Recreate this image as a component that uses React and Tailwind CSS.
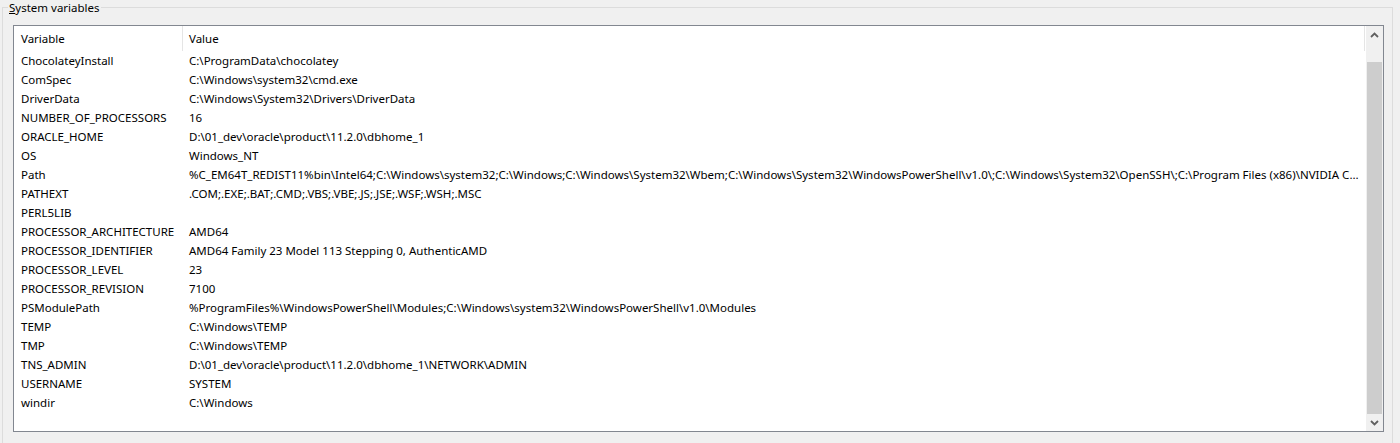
import React from 'react';

const rows = [
  ['ChocolateyInstall', 'C:\\ProgramData\\chocolatey'],
  ['ComSpec', 'C:\\Windows\\system32\\cmd.exe'],
  ['DriverData', 'C:\\Windows\\System32\\Drivers\\DriverData'],
  ['NUMBER_OF_PROCESSORS', '16'],
  ['ORACLE_HOME', 'D:\\01_dev\\oracle\\product\\11.2.0\\dbhome_1'],
  ['OS', 'Windows_NT'],
  [
    'Path',
    '%C_EM64T_REDIST11%bin\\Intel64;C:\\Windows\\system32;C:\\Windows;C:\\Windows\\System32\\Wbem;C:\\Windows\\System32\\WindowsPowerShell\\v1.0\\;C:\\Windows\\System32\\OpenSSH\\;C:\\Program Files (x86)\\NVIDIA Corporation\\PhysX\\Common;C:\\Program Files\\NVIDIA Corporation\\NVIDIA NvDLISR',
  ],
  ['PATHEXT', '.COM;.EXE;.BAT;.CMD;.VBS;.VBE;.JS;.JSE;.WSF;.WSH;.MSC'],
  ['PERL5LIB', ''],
  ['PROCESSOR_ARCHITECTURE', 'AMD64'],
  ['PROCESSOR_IDENTIFIER', 'AMD64 Family 23 Model 113 Stepping 0, AuthenticAMD'],
  ['PROCESSOR_LEVEL', '23'],
  ['PROCESSOR_REVISION', '7100'],
  ['PSModulePath', '%ProgramFiles%\\WindowsPowerShell\\Modules;C:\\Windows\\system32\\WindowsPowerShell\\v1.0\\Modules'],
  ['TEMP', 'C:\\Windows\\TEMP'],
  ['TMP', 'C:\\Windows\\TEMP'],
  ['TNS_ADMIN', 'D:\\01_dev\\oracle\\product\\11.2.0\\dbhome_1\\NETWORK\\ADMIN'],
  ['USERNAME', 'SYSTEM'],
  ['windir', 'C:\\Windows'],
];

function Chevron({ up }) {
  return (
    <svg width="9" height="6" viewBox="0 0 9 6" className="text-[#606060]">
      <path
        d={up ? 'M1 5 L4.5 1.5 L8 5' : 'M1 1 L4.5 4.5 L8 1'}
        fill="none"
        stroke="currentColor"
        strokeWidth="1.8"
      />
    </svg>
  );
}

export default function App() {
  return (
    <div
      className="w-[1400px] h-[443px] overflow-hidden bg-[#f0f0f0] text-[11.5px] text-black"
      style={{ fontFamily: '"Segoe UI", "Noto Sans", sans-serif' }}
    >
      <fieldset className="ml-[2px] mr-[7px] h-[460px] border border-[#dcdcdc] pl-[10px] pr-[8px]">
        <legend className="ml-[-5px] px-[1px] leading-[15px]">
          <span className="underline">S</span>ystem variables
        </legend>
        <div className="mt-[10px] h-[407px] border border-[#828790] bg-white flex">
          <div className="flex-1 min-w-0">
            <div className="flex h-[25px] items-center">
              <div className="w-[169px] h-full pl-[7px] flex items-center border-r border-[#e5e5e5]">
                Variable
              </div>
              <div className="w-[1182px] h-full pl-[6px] flex items-center border-r border-[#e5e5e5]">
                Value
              </div>
            </div>
            {rows.map(([name, value]) => (
              <div key={name} className="flex h-[19px] items-center">
                <div className="w-[169px] pl-[7px] truncate">{name}</div>
                <div className="w-[1180px] pl-[6px] truncate">{value}</div>
              </div>
            ))}
          </div>
          <div className="w-[17px] bg-[#f0f0f0] flex flex-col">
            <div className="h-[17px] flex items-center justify-center">
              <Chevron up />
            </div>
            <div className="h-[19px]" />
            <div className="flex-1 bg-[#cdcdcd] mx-[1px]" />
            <div className="h-[17px] flex items-center justify-center">
              <Chevron />
            </div>
          </div>
        </div>
      </fieldset>
    </div>
  );
}
